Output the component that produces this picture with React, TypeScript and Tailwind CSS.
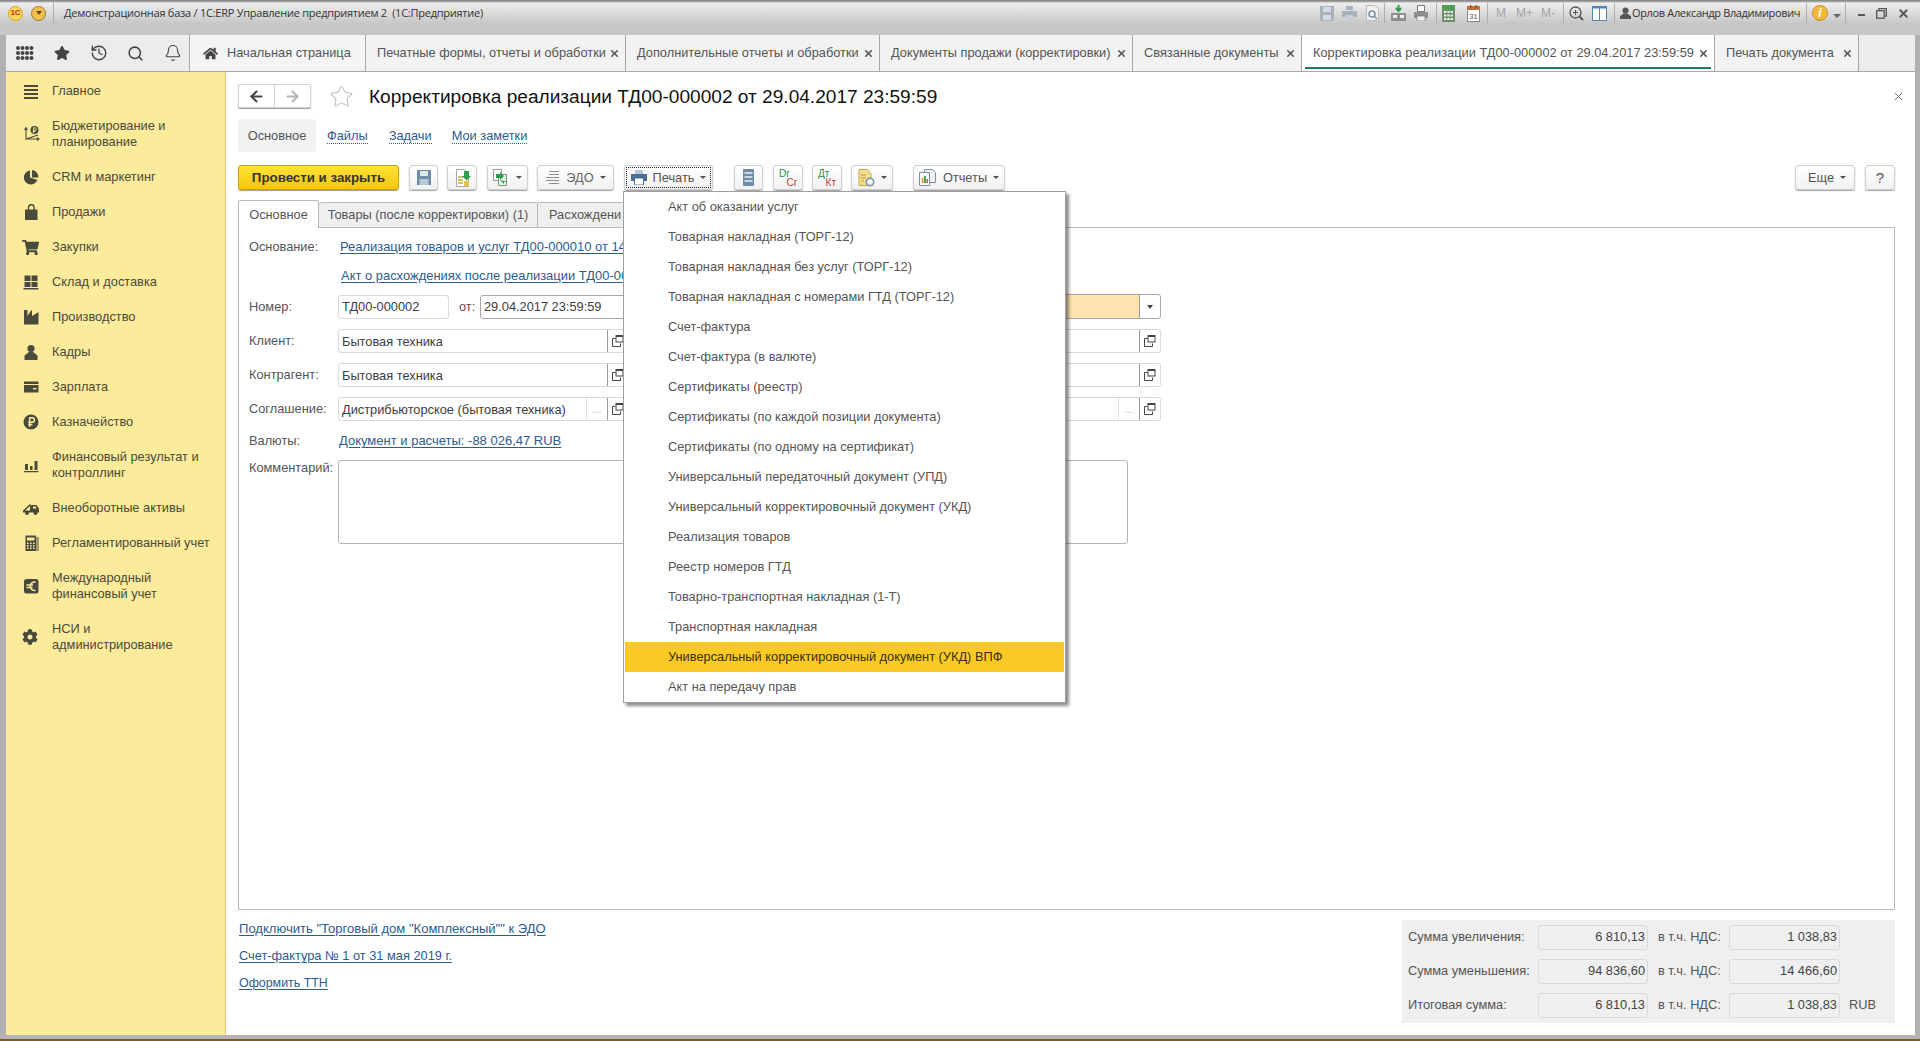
import { ArrowLeft, ArrowRight, Bell, History, Search, Star, X } from 'lucide-react'
import { FaCog, FaHome, FaShoppingCart, FaStar } from 'react-icons/fa'
import type { ReactNode } from 'react'

const Ico = ({ children, size = 18, box = 18 }: { children: ReactNode; size?: number; box?: number }) => (
  <svg width={size} height={size} viewBox={`0 0 ${box} ${box}`} className="shrink-0">
    {children}
  </svg>
)

const dark = '#4a4a3c'

const navItems: { label: string; icon: ReactNode }[] = [
  {
    label: 'Главное',
    icon: (
      <Ico>
        <path d="M2 3h14v2H2zM2 7h14v2H2zM2 11h14v2H2zM2 15h14v2H2z" fill={dark} />
      </Ico>
    ),
  },
  {
    label: 'Бюджетирование и\nпланирование',
    icon: (
      <Ico>
        <path d="M4 3v11l12-4M4 14h13M2.5 5L4 2.5 5.5 5M15 12.5l2 1.5-2 1.5" fill="none" stroke={dark} strokeWidth="1.1" />
        <circle cx="12.5" cy="5" r="4" fill={dark} />
        <path d="M11.5 8V2.8h1.6a1.2 1.2 0 010 2.6h-2.2M10.9 6.6h2.4" fill="none" stroke="#fbeb9a" strokeWidth="0.9" />
      </Ico>
    ),
  },
  {
    label: 'CRM и маркетинг',
    icon: (
      <Ico>
        <path d="M8 2.5a7 7 0 107.4 9.4L8 9.5z" fill={dark} />
        <path d="M10 2a7 7 0 016.3 7.6H10z" fill={dark} />
      </Ico>
    ),
  },
  {
    label: 'Продажи',
    icon: (
      <Ico>
        <path d="M3 6.5h12.5V17H3z" fill={dark} />
        <path d="M6.5 8V4.5a2.8 2.8 0 015.6 0V8" fill="none" stroke={dark} strokeWidth="1.4" />
      </Ico>
    ),
  },
  {
    label: 'Закупки',
    icon: (
      <span className="text-[#4a4a3c]">
        <FaShoppingCart size={17} />
      </span>
    ),
  },
  {
    label: 'Склад и доставка',
    icon: (
      <Ico>
        <path d="M2.5 2.5h6v5.5h-6zM9.5 2.5h6v5.5h-6zM2.5 9h6v5h-6zM9.5 9h6v5h-6zM1.5 15h15v1.6h-15z" fill={dark} />
      </Ico>
    ),
  },
  {
    label: 'Производство',
    icon: (
      <Ico>
        <path d="M2 16.5V2h3.5v6L9 2.5h1V8l6.5-4v12.5z" fill={dark} />
      </Ico>
    ),
  },
  {
    label: 'Кадры',
    icon: (
      <Ico>
        <circle cx="9" cy="5.5" r="3.6" fill={dark} />
        <path d="M7 9h4l4.5 3.5v4.5h-13v-4.5z" fill={dark} />
      </Ico>
    ),
  },
  {
    label: 'Зарплата',
    icon: (
      <Ico>
        <path d="M2 3.5h14.5v2.5H2zM2 7h14.5v7.5H2z" fill={dark} />
        <path d="M11 10h3.5v1.4H11z" fill="#fbeb9a" />
      </Ico>
    ),
  },
  {
    label: 'Казначейство',
    icon: (
      <Ico>
        <circle cx="9" cy="9" r="7.5" fill={dark} />
        <path d="M7.7 14V4.8h2.5a2.2 2.2 0 010 4.5H6.2M6.2 11.5h4.2" fill="none" stroke="#fbeb9a" strokeWidth="1.5" />
      </Ico>
    ),
  },
  {
    label: 'Финансовый результат и\nконтроллинг',
    icon: (
      <Ico>
        <path d="M3 8h3v6H3zM8 10h2.5v4H8zM12.5 5h3v9h-3zM2 15h14.5v1.3H2z" fill={dark} />
      </Ico>
    ),
  },
  {
    label: 'Внеоборотные активы',
    icon: (
      <Ico>
        <path d="M1 11.5L8 5l1 1.2L3 11.5h5V7.5l1.5-1.5h5l2.5 3.5v4H1z" fill={dark} />
        <circle cx="5" cy="14" r="2" fill={dark} />
        <circle cx="13.5" cy="14" r="2" fill={dark} />
        <path d="M11 7.5h2.6l1.2 2H11z" fill="#fbeb9a" />
      </Ico>
    ),
  },
  {
    label: 'Регламентированный учет',
    icon: (
      <Ico>
        <path d="M3.5 1.5h10l1 2V17h-11z" fill={dark} />
        <path d="M5 3.5h7.5v3H5zM5 8.5h1.6v1.4H5zM8 8.5h1.6v1.4H8zM11 8.5h1.6v1.4H11zM5 11h1.6v1.4H5zM8 11h1.6v1.4H8zM11 11h1.6v1.4H11zM5 13.5h1.6v1.4H5zM8 13.5h1.6v1.4H8zM11 13.5h1.6v1.4H11z" fill="#fbeb9a" />
        <path d="M15.5 3h1v14h-1z" fill={dark} />
      </Ico>
    ),
  },
  {
    label: 'Международный\nфинансовый учет',
    icon: (
      <Ico>
        <rect x="2" y="2" width="14.5" height="14.5" rx="2.5" fill={dark} />
        <path d="M13.5 5.2a4.2 4.2 0 100 8.1M4.5 8h6.5M4.5 10.5h6" fill="none" stroke="#fbeb9a" strokeWidth="1.4" />
      </Ico>
    ),
  },
  {
    label: 'НСИ и\nадминистрирование',
    icon: (
      <span className="text-[#4a4a3c]">
        <FaCog size={16} />
      </span>
    ),
  },
]

const tabs = [
  { label: 'Печатные формы, отчеты и обработки', w: 'w-[260px]' },
  { label: 'Дополнительные отчеты и обработки', w: 'w-[254px]' },
  { label: 'Документы продажи (корректировки)', w: 'w-[253px]' },
  { label: 'Связанные документы', w: 'w-[169px]' },
  { label: 'Корректировка реализации ТД00-000002 от 29.04.2017 23:59:59', w: 'w-[413px]', active: true },
  { label: 'Печать документа', w: 'w-[144px]' },
]

const printItems = [
  'Акт об оказании услуг',
  'Товарная накладная (ТОРГ-12)',
  'Товарная накладная без услуг (ТОРГ-12)',
  'Товарная накладная с номерами ГТД (ТОРГ-12)',
  'Счет-фактура',
  'Счет-фактура (в валюте)',
  'Сертификаты (реестр)',
  'Сертификаты (по каждой позиции документа)',
  'Сертификаты (по одному на сертификат)',
  'Универсальный передаточный документ (УПД)',
  'Универсальный корректировочный документ (УКД)',
  'Реализация товаров',
  'Реестр номеров ГТД',
  'Товарно-транспортная накладная (1-Т)',
  'Транспортная накладная',
  'Универсальный корректировочный документ (УКД) ВПФ',
  'Акт на передачу прав',
]

const totals = [
  { label: 'Сумма увеличения:', sum: '6 810,13', vat: '1 038,83' },
  { label: 'Сумма уменьшения:', sum: '94 836,60', vat: '14 466,60' },
  { label: 'Итоговая сумма:', sum: '6 810,13', vat: '1 038,83', unit: 'RUB' },
]

const btn =
  'flex items-center justify-center h-[25px] rounded-[3px] border border-[#cfcfcf] bg-linear-to-b from-white to-[#f1f1f1] shadow-[0_1px_1px_#a0a0a0] text-[#555]'

const Caret = () => <span className="ml-[6px] w-0 h-0 border-x-[3px] border-x-transparent border-t-[3px] border-t-[#555]" />

const OpenIcon = () => (
  <svg width="12" height="12" viewBox="0 0 12 12" fill="none" stroke="#444" strokeWidth="1">
    <path d="M3.5 3.5H.5v8h8V8.5" />
    <rect x="4" y="0.5" width="7" height="6.5" fill="#fff" />
    <path d="M4 1.5h7" />
  </svg>
)

function Field({ text, className, dots, border = 'border-[#d9d9d9]' }: { text: string; className: string; dots?: boolean; border?: string }) {
  return (
    <div className={`flex h-[24px] rounded-[3px] border bg-white ${border} ${className}`}>
      <span className="flex-1 pl-[3px] leading-[23px] text-[#3d3d3d] whitespace-nowrap overflow-hidden">{text}</span>
      {dots && <span className="w-[21px] border-l border-[#e0e0e0] text-[#aaa] text-center leading-[24px] text-[10px]">...</span>}
      <span className="w-[21px] flex items-center justify-center border-l border-[#9a9a9a]">
        <OpenIcon />
      </span>
    </div>
  )
}

const Label = ({ children }: { children: ReactNode }) => <span className="w-[89px] shrink-0 text-[#555]">{children}</span>

const Link = ({ children, className = 'text-[13px]' }: { children: ReactNode; className?: string }) => (
  <a className={`text-[#2c5c8c] underline underline-offset-2 whitespace-nowrap ${className}`}>{children}</a>
)

const GroupLink = ({ children, className }: { children: ReactNode; className: string }) => (
  <a className={`text-[#2c5c8c] border-b border-dotted border-[#2c5c8c] leading-[15px] ${className}`}>{children}</a>
)

function TitleIcons() {
  const grey = '#a9b2bb'
  return (
    <div className="flex items-center h-full ml-auto">
      <svg width="14" height="15" viewBox="0 0 14 15">
        <path d="M0 0h14v15H0z" fill={grey} />
        <path d="M3 1h8v5H3zM3 9h8v5H3z" fill="#d5dbe0" />
      </svg>
      <svg width="15" height="15" viewBox="0 0 15 15" className="ml-[8px]">
        <path d="M4 0h7v4H4zM0 5h15v6H0z" fill={grey} />
        <path d="M3.5 9h8v6h-8z" fill="#c8ced4" />
      </svg>
      <svg width="13" height="16" viewBox="0 0 13 16" className="ml-[9px]">
        <path d="M.5.5h8l4 4v11H.5z" fill="#eef0f2" stroke="#b5bdc5" />
        <circle cx="6" cy="9" r="3" fill="none" stroke="#7d94a8" strokeWidth="1.6" />
        <path d="M8 11l3 3" stroke="#7d94a8" strokeWidth="1.6" />
      </svg>
      <span className="w-px h-[20px] bg-[#aeaeae] ml-[5px]" />
      <svg width="15" height="17" viewBox="0 0 15 17" className="ml-[6px]">
        <path d="M7.5 0v5M5 3l2.5 3L10 3" stroke="#2e9a48" strokeWidth="2" fill="none" />
        <path d="M0 8h15v8H0z" fill="#8f8f8f" />
        <path d="M2 10h4v3H2zM9 10h4v3H9z" fill="#eee" />
      </svg>
      <svg width="14" height="16" viewBox="0 0 14 16" className="ml-[8px]">
        <path d="M3.5.5h7v6h-7z" fill="#fff" stroke="#777" />
        <path d="M0 7h14v6H0z" fill="#8f8f8f" />
        <path d="M3 11h8v5H3z" fill="#eee" stroke="#777" strokeWidth="0.7" />
      </svg>
      <span className="w-px h-[20px] bg-[#aeaeae] ml-[8px]" />
      <svg width="13" height="17" viewBox="0 0 13 17" className="ml-[5px]">
        <rect width="13" height="17" fill="#6e8f6a" />
        <rect width="13" height="4" fill="#49a155" />
        <path d="M2 6h2.4v2H2zM5.3 6h2.4v2H5.3zM8.6 6H11v2H8.6zM2 9.5h2.4v2H2zM5.3 9.5h2.4v2H5.3zM8.6 9.5H11v2H8.6zM2 13h2.4v2H2zM5.3 13h2.4v2H5.3zM8.6 13H11v2H8.6z" fill="#e8eee8" />
      </svg>
      <svg width="13" height="17" viewBox="0 0 13 17" className="ml-[12px]">
        <rect x="0.5" y="3" width="12" height="13.5" fill="#fff" stroke="#8a8a8a" />
        <rect width="13" height="4" y="1" fill="#c0703c" />
        <path d="M3 0h1.4v3H3zM8.6 0H10v3H8.6z" fill="#8a5a3a" />
        <text x="6.5" y="14" fontSize="7.5" textAnchor="middle" fill="#555" fontFamily="Liberation Sans">31</text>
      </svg>
      <span className="w-px h-[20px] bg-[#aeaeae] ml-[7px]" />
      <span className="ml-[8px] text-[12px] text-[#a3a3a3]">M</span>
      <span className="ml-[10px] text-[12px] text-[#a3a3a3]">M+</span>
      <span className="ml-[8px] text-[12px] text-[#a3a3a3]">M-</span>
      <span className="w-px h-[20px] bg-[#aeaeae] ml-[8px]" />
      <svg width="15" height="15" viewBox="0 0 15 15" className="ml-[5px]" fill="none" stroke="#555">
        <circle cx="6.5" cy="6.5" r="5.5" strokeWidth="1.3" />
        <path d="M10.5 10.5L14 14" strokeWidth="2" />
        <path d="M4 6.5h5M6.5 4v5" />
      </svg>
      <svg width="15" height="15" viewBox="0 0 15 15" className="ml-[8px]">
        <rect x="0.5" y="0.5" width="14" height="14" fill="#fff" stroke="#4f86ad" />
        <rect width="15" height="2.5" fill="#4f86ad" />
        <path d="M7.5 2v13" stroke="#4f86ad" />
      </svg>
      <span className="w-px h-[20px] bg-[#aeaeae] ml-[7px]" />
      <svg width="11" height="12" viewBox="0 0 11 12" className="ml-[5px]">
        <circle cx="5.5" cy="3.5" r="3" fill="#555" />
        <path d="M3.5 6.5h4L11 9.5V12H0V9.5z" fill="#555" />
      </svg>
      <span className="ml-[1px] w-[171px] font-['Open_Sans',sans-serif] text-[11px] tracking-[-0.35px] text-[#333] whitespace-nowrap">Орлов Александр Владимирович</span>
      <span className="w-px h-[20px] bg-[#aeaeae] ml-[3px]" />
      <span className="ml-[5px] w-[16px] h-[16px] rounded-full bg-[#f3b93a] border border-[#c98f22] flex items-center justify-center text-white italic font-bold text-[12px]">i</span>
      <span className="ml-[5px] mt-[5px] w-0 h-0 border-x-[4px] border-x-transparent border-t-[4px] border-t-[#666]" />
      <span className="w-px h-[20px] bg-[#aeaeae] ml-[4px]" />
      <span className="ml-[12px] mt-[4px] w-[7px] h-[2px] bg-[#555]" />
      <svg width="11" height="11" viewBox="0 0 11 11" className="ml-[11px]" fill="none" stroke="#555" strokeWidth="1.3">
        <rect x="0.7" y="2.7" width="7.5" height="7.5" />
        <path d="M3 2.5V.7h7.3V8H8.5" />
      </svg>
      <X size={13} strokeWidth={3.5} className="ml-[10px] mr-[10px] text-[#555]" />
    </div>
  )
}

export default function App() {
  return (
    <div className="relative w-[1920px] h-[1041px] overflow-hidden flex flex-col bg-[#b0b0b0] font-['Liberation_Sans',Arial,sans-serif] text-[12.8px] leading-[16px] text-[#444]">
      {/* window title bar */}
      <header className="h-[35px] shrink-0 flex items-start bg-linear-to-b from-[#8a8a8a] from-[1px] via-[#eeeeee] via-[3px] to-[#c6c6c6] to-[24px] pl-[8px]">
        <div className="h-[26px] flex items-center w-full">
          <span className="w-[15px] h-[15px] rounded-full bg-[#fbd75b] border border-[#d9a520] flex items-center justify-center text-[#c8261c] text-[8px] font-bold leading-none">1С</span>
          <span className="ml-[8px] w-[15px] h-[15px] rounded-full bg-[#f4c04e] border border-[#9a7a35] flex items-center justify-center">
            <span className="w-0 h-0 border-x-[3.5px] border-x-transparent border-t-[4px] border-t-[#6b4a10]" />
          </span>
          <span className="w-px h-[20px] bg-[#b0b0b0] ml-[7px]" />
          <span className="ml-[10px] font-['Open_Sans',sans-serif] text-[11px] tracking-[-0.25px] text-[#333] whitespace-pre">Демонстрационная база / 1С:ERP Управление предприятием 2  (1С:Предприятие)</span>
          <TitleIcons />
        </div>
      </header>

      <div className="flex-1 min-h-0 flex flex-col ml-[6px] mr-[5px]">
        {/* open windows tabs */}
        <nav className="h-[37px] shrink-0 flex bg-[#ececec] border-b border-[#a8a8a8]">
          <div className="w-[184px] h-full flex items-center border-r border-[#a8a8a8] text-[#444]">
            <svg width="18" height="14" viewBox="0 0 18 14" className="ml-[10px]" fill="#444">
              {[0, 1, 2].map((r) => [0, 1, 2, 3].map((c) => <circle key={`${r}${c}`} cx={2 + c * 4.5} cy={2 + r * 5} r="2" />))}
            </svg>
            <FaStar size={16} className="ml-[20px]" />
            <History size={18} strokeWidth={1.8} className="ml-[20px]" />
            <Search size={17} strokeWidth={2.2} className="ml-[19px]" />
            <Bell size={18} strokeWidth={1.5} className="ml-[20px]" />
          </div>
          <div className="w-[176px] h-full flex items-center bg-[#f4f4f4] border-r border-[#a8a8a8] pl-[13px]">
            <FaHome size={15} className="text-[#444]" />
            <span className="ml-[9px] text-[#555]">Начальная страница</span>
          </div>
          {tabs.map((t) => (
            <div key={t.label} className={`relative h-full flex items-center justify-between pl-[11px] pr-[5px] border-r border-[#a8a8a8] ${t.w} ${t.active ? 'bg-white' : 'bg-[#f2f2f2]'}`}>
              <span className="text-[#555] whitespace-nowrap">{t.label}</span>
              <X size={11} strokeWidth={3.5} className="text-[#555] shrink-0" />
              {t.active && <span className="absolute left-[3px] right-[3px] bottom-[2px] h-[2px] bg-[#227a5c]" />}
            </div>
          ))}
        </nav>

        <div className="flex-1 min-h-0 flex">
          {/* sections panel */}
          <aside className="w-[220px] shrink-0 bg-[#fbeb9a] border-r border-[#d8c878] pt-[1.5px]">
            {navItems.map((item) => (
              <div key={item.label} className="flex items-center py-[9.5px]">
                <span className="w-[46px] h-[16px] pl-[16px] flex items-center shrink-0">{item.icon}</span>
                <span className="text-[#4a4a3c] whitespace-pre-line">{item.label}</span>
              </div>
            ))}
          </aside>

          {/* document form */}
          <main className="flex-1 min-w-0 flex flex-col bg-white pl-[12px] pr-[20px]">
            <div className="mt-[12px] h-[24px] flex items-center shrink-0">
              <div className="w-[73px] h-[24px] flex rounded-[2px] border border-[#cfcfcf] bg-white shadow-[0_1px_1px_#999]">
                <span className="w-[36px] flex items-center justify-center border-r border-[#d5d5d5]">
                  <ArrowLeft size={17} strokeWidth={3} className="text-[#444]" />
                </span>
                <span className="flex-1 flex items-center justify-center">
                  <ArrowRight size={17} strokeWidth={3} className="text-[#b4b4b4]" />
                </span>
              </div>
              <Star size={25} strokeWidth={1} className="ml-[18px] text-[#bdbdbd]" />
              <h1 className="ml-[15px] mt-[2px] text-[19.1px] leading-[24px] text-[#111] font-normal whitespace-nowrap">Корректировка реализации ТД00-000002 от 29.04.2017 23:59:59</h1>
              <X size={13} strokeWidth={1.5} className="ml-auto -mr-[10px] text-[#555]" />
            </div>

            <div className="mt-[11px] h-[33px] flex items-center shrink-0">
              <span className="w-[78px] h-full flex items-center justify-center rounded-[4px] bg-[#f2f2f2] text-[#555]">Основное</span>
              <GroupLink className="ml-[11px]">Файлы</GroupLink>
              <GroupLink className="ml-[21px]">Задачи</GroupLink>
              <GroupLink className="ml-[20px]">Мои заметки</GroupLink>
            </div>

            <div className="mt-[13px] h-[26px] flex items-start shrink-0">
              <button className="w-[161px] h-[25px] rounded-[3px] border border-[#c99f10] bg-linear-to-b from-[#ffe433] to-[#f7c500] shadow-[0_1px_1px_#999] font-bold text-[13.3px] text-[#333]">Провести и закрыть</button>
              <button className={`${btn} w-[29px] ml-[10px]`}>
                <svg width="14" height="15" viewBox="0 0 14 15">
                  <path d="M0 0h14v15H0z" fill="#6f8ba8" />
                  <path d="M3 1h8v5H3z" fill="#dfe7ee" />
                  <path d="M2.5 9h9v6h-9z" fill="#b9c8d6" />
                </svg>
              </button>
              <button className={`${btn} w-[30px] ml-[9px]`}>
                <svg width="17" height="18" viewBox="0 0 17 18">
                  <path d="M2.5.5h8l4 4v13h-12z" fill="#fff" stroke="#a9a9a9" />
                  <path d="M4 8h5M4 11h5M4 14h5" stroke="#c9a83a" strokeWidth="1.3" />
                  <path d="M10 2h5v5h2l-4.5 4.5L8 7h2z" fill="#2fa04e" />
                  <path d="M10 12h5v5h-5z" fill="#eac04a" />
                </svg>
              </button>
              <button className={`${btn} w-[41px] ml-[10px]`}>
                <svg width="17" height="17" viewBox="0 0 17 17">
                  <path d="M.5.5h8v11h-8z" fill="#fff" stroke="#8a9a8a" />
                  <path d="M5.5 5.5h8v11h-8z" fill="#e8f3e8" stroke="#7a9a7a" />
                  <path d="M3 5l4 0v-2l4 4-4 4V9H3zM15 13h-4v2l-4-4" fill="#2f9a50" />
                </svg>
                <Caret />
              </button>
              <button className={`${btn} w-[77px] ml-[9px]`}>
                <svg width="15" height="16" viewBox="0 0 15 16" fill="none" stroke="#8d8d8d" strokeWidth="1.2">
                  <path d="M4 1.5h10M4 4.5h10M1 7.5h13M1 10.5h13M4 13.5h10" />
                </svg>
                <span className="ml-[6px] text-[#666]">ЭДО</span>
                <Caret />
              </button>
              <button className={`${btn} w-[89px] ml-[10px] outline-1 outline-dotted -outline-offset-3 outline-[#222]`}>
                <svg width="16" height="15" viewBox="0 0 16 15">
                  <path d="M4 0h8v4H4z" fill="#b8c7d6" />
                  <path d="M0 4h16v7H0z" fill="#4a6f92" />
                  <path d="M3.5 8h9v7h-9z" fill="#fff" stroke="#4a6f92" />
                </svg>
                <span className="ml-[6px] text-[#555]">Печать</span>
                <Caret />
              </button>
              <button className={`${btn} w-[29px] ml-[21px]`}>
                <svg width="11" height="17" viewBox="0 0 11 17">
                  <rect width="11" height="17" rx="1" fill="#6f8ba8" />
                  <path d="M1.5 3h8v2h-8zM1.5 7h8v2h-8zM1.5 11h8v2h-8z" fill="#cbd7e2" />
                </svg>
              </button>
              <button className={`${btn} w-[30px] ml-[10px] flex-col text-[10px] leading-[9px]`}>
                <span className="self-start pl-[5px] text-[#27904f]">Dr</span>
                <span className="self-end pr-[5px] text-[#b8403a]">Cr</span>
              </button>
              <button className={`${btn} w-[30px] ml-[9px] flex-col text-[10px] leading-[9px]`}>
                <span className="self-start pl-[5px] text-[#27904f]">Дт</span>
                <span className="self-end pr-[5px] text-[#b8403a]">Кт</span>
              </button>
              <button className={`${btn} w-[42px] ml-[9px]`}>
                <svg width="17" height="18" viewBox="0 0 17 18">
                  <path d="M1 .5h8l4 4v12H1z" fill="#f4dc90" stroke="#c8a848" />
                  <path d="M3 6h5M3 9h5M3 12h3" stroke="#b8983a" />
                  <circle cx="12" cy="13" r="4.5" fill="#7f9ab2" />
                  <circle cx="12" cy="13" r="2.8" fill="#fff" />
                </svg>
                <Caret />
              </button>
              <button className={`${btn} w-[92px] ml-[20px]`}>
                <svg width="17" height="17" viewBox="0 0 17 17">
                  <path d="M5.5.5h8l3 3v10h-11z" fill="#f2f2f2" stroke="#7e8e9e" />
                  <path d="M.5 3.5h10v13H.5z" fill="#fff" stroke="#7e8e9e" />
                  <path d="M2.5 9h2v5h-2z" fill="#d7a23c" />
                  <path d="M5 7h2v7H5z" fill="#4f9e5a" />
                  <path d="M7.5 10h1.5v4H7.5z" fill="#c25c4c" />
                </svg>
                <span className="ml-[7px] text-[#555]">Отчеты</span>
                <Caret />
              </button>
              <button className={`${btn} w-[60px] ml-auto pl-[4px]`}>
                <span className="text-[#555]">Еще</span>
                <Caret />
              </button>
              <button className={`${btn} w-[30px] ml-[10px] text-[15px] text-[#333]`}>?</button>
            </div>

            <div className="mt-[9px] h-[28px] flex items-end shrink-0 relative z-10 -mb-px">
              <span className="w-[81px] h-[28px] flex items-center justify-center rounded-t-[3px] border border-b-0 border-[#b9b9b9] bg-white text-[#555]">Основное</span>
              <span className="w-[219px] h-[26px] flex items-center justify-center rounded-t-[3px] border border-l-0 border-[#b9b9b9] bg-[#efefef] text-[#555]">Товары (после корректировки) (1)</span>
              <span className="w-[85px] h-[26px] pl-[11px] leading-[24px] whitespace-nowrap border-t border-b border-[#b9b9b9] bg-[#efefef] text-[#555]">Расхождени</span>
            </div>

            <section className="flex-1 min-h-0 border border-[#b9b9b9] pl-[10px] pt-[7px]">
              <div className="h-[24px] flex items-center">
                <Label>Основание:</Label>
                <span className="ml-[2px]"><Link className="text-[12.95px]">Реализация товаров и услуг ТД00-000010 от 14</Link></span>
              </div>
              <div className="mt-[5px] h-[24px] flex items-center pl-[92px]">
                <Link className="text-[12.95px]">Акт о расхождениях после реализации ТД00-00</Link>
              </div>

              <div className="mt-[6px] w-[912px] flex items-center">
                <Label>Номер:</Label>
                <span className="w-[111px] h-[24px] rounded-[3px] border border-[#d9d9d9] pl-[3px] leading-[22px] text-[#3d3d3d]">ТД00-000002</span>
                <span className="ml-[10px] w-[21px] text-[#555]">от:</span>
                <span className="w-[170px] h-[24px] rounded-[3px] border border-[#a8a8a8] pl-[3px] leading-[22px] text-[#3d3d3d]">29.04.2017 23:59:59</span>
                <div className="ml-auto w-[400px] h-[25px] flex rounded-[3px] border border-[#a8a8a8]">
                  <span className="flex-1 bg-[#fde3b0] rounded-l-[3px]" />
                  <span className="w-[21px] flex items-center justify-center border-l border-[#9a9a9a]">
                    <span className="w-0 h-0 border-x-[3.5px] border-x-transparent border-t-[4px] border-t-[#444]" />
                  </span>
                </div>
              </div>
              {['Клиент:', 'Контрагент:', 'Соглашение:'].map((label, i) => (
                <div key={label} className="mt-[10px] w-[912px] flex items-center">
                  <Label>{label}</Label>
                  <Field className="w-[291px]" text={i === 2 ? 'Дистрибьюторское (бытовая техника)' : 'Бытовая техника'} dots={i === 2} />
                  <Field className="ml-auto w-[400px]" text="" dots={i === 2} />
                </div>
              ))}

              <div className="mt-[8px] h-[24px] flex items-center">
                <Label>Валюты:</Label>
                <span className="ml-[1px]"><Link>Документ и расчеты: -88 026,47 RUB</Link></span>
              </div>
              <div className="mt-[7px] flex items-start">
                <span className="w-[89px] text-[#555]">Комментарий:</span>
                <div className="w-[790px] h-[84px] rounded-[3px] border border-[#b4b4b4]" />
              </div>
            </section>

            <footer className="h-[125px] shrink-0 flex justify-between">
              <div className="flex flex-col items-start gap-[11px] mt-[11px] ml-[1px]">
                <Link className="text-[13.05px]">Подключить "Торговый дом "Комплексный"" к ЭДО</Link>
                <Link className="text-[12.8px]">Счет-фактура № 1 от 31 мая 2019 г.</Link>
                <Link className="text-[12.4px]">Оформить ТТН</Link>
              </div>
              <div className="mt-[10px] w-[493px] h-[103px] bg-[#efefef] pl-[6px] pt-[5px] flex flex-col gap-[9px] text-[#555]">
                {totals.map((row) => (
                  <div key={row.label} className="h-[25px] flex items-start leading-[23px]">
                    <span className="w-[130px]">{row.label}</span>
                    <span className="w-[110px] h-[25px] rounded-[3px] border border-[#d9d9d9] text-right pr-[2px] leading-[22px] text-[#444]">{row.sum}</span>
                    <span className="w-[81px] pl-[10px]">в т.ч. НДС:</span>
                    <span className="w-[111px] h-[25px] rounded-[3px] border border-[#d9d9d9] text-right pr-[2px] leading-[22px] text-[#444]">{row.vat}</span>
                    {row.unit && <span className="ml-[9px]">{row.unit}</span>}
                  </div>
                ))}
              </div>
            </footer>
          </main>
        </div>
      </div>

      <div className="h-[4px] shrink-0 bg-[#b4b4b4]" />
      <div className="h-[2px] shrink-0 bg-[#7c5c24]" />

      {/* print menu, lies over the form */}
      <div className="absolute left-[623px] top-[191px] w-[443px] h-[512px] border border-[#9f9f9f] bg-white shadow-[3px_3px_3px_rgba(0,0,0,0.45)] z-20">
        {printItems.map((item, i) => (
          <div key={item} className={`h-[30px] flex items-center pl-[43px] mx-px whitespace-nowrap ${i === 15 ? 'bg-[#f9ca24] text-[#3a2f10]' : 'text-[#555]'}`}>
            {item}
          </div>
        ))}
      </div>
    </div>
  )
}
